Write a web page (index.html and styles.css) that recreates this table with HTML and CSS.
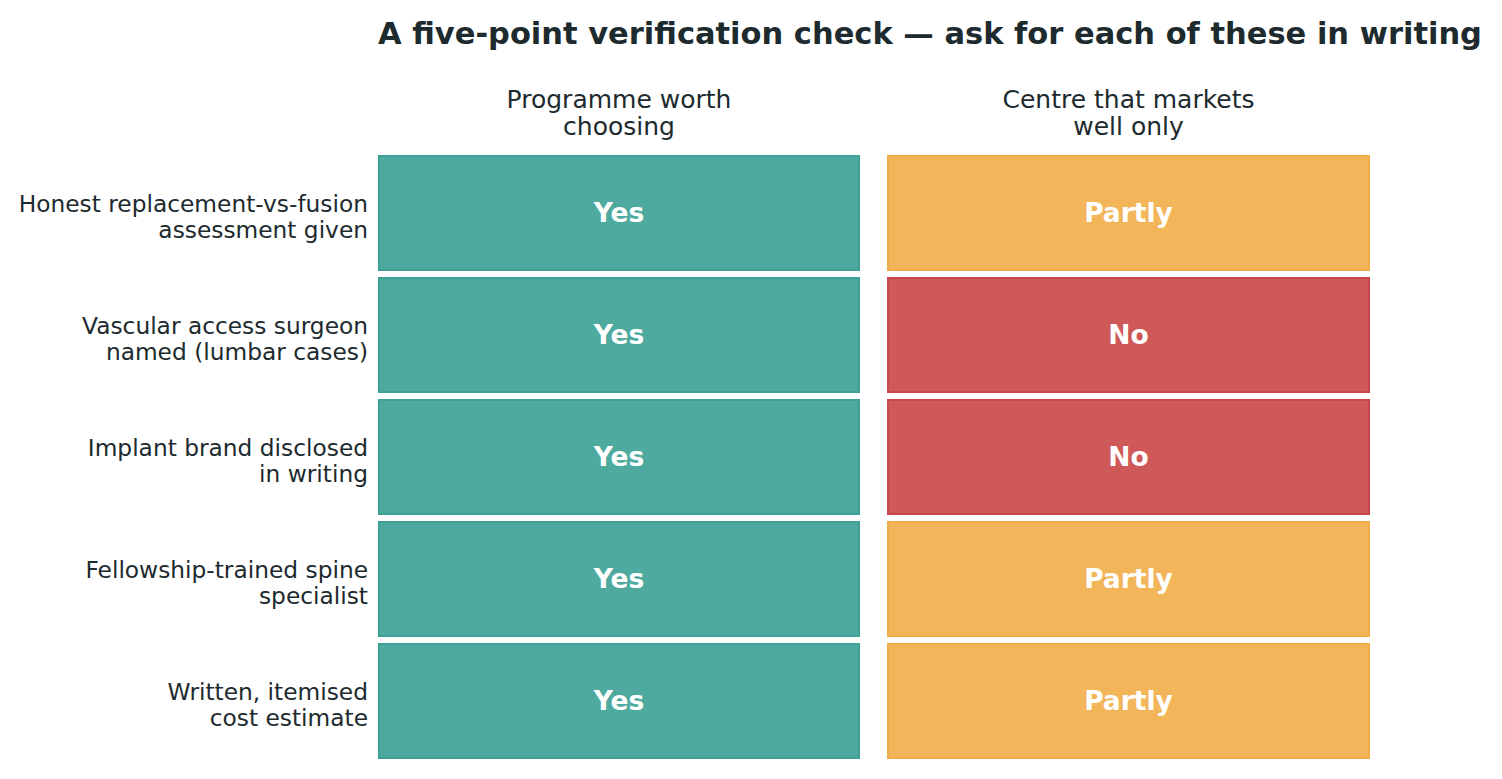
FILE: index.html
```html
<!DOCTYPE html>
<html lang="en">
<head>
<meta charset="utf-8">
<title>Five-point verification check</title>
<link rel="stylesheet" href="styles.css">
</head>
<body>
<div class="chart">
  <h1 class="title">A five-point verification check — ask for each of these in writing</h1>
  <div class="head-row">
    <div class="label-spacer"></div>
    <div class="pair">
      <div class="col-head">Programme worth<br>choosing</div>
      <div class="col-head">Centre that markets<br>well only</div>
    </div>
  </div>
  <div class="rows">
    <div class="row">
      <div class="label">Honest replacement-vs-fusion<br>assessment given</div>
      <div class="pair">
        <div class="cell yes">Yes</div>
        <div class="cell partly">Partly</div>
      </div>
    </div>
    <div class="row">
      <div class="label">Vascular access surgeon<br>named (lumbar cases)</div>
      <div class="pair">
        <div class="cell yes">Yes</div>
        <div class="cell no">No</div>
      </div>
    </div>
    <div class="row">
      <div class="label">Implant brand disclosed<br>in writing</div>
      <div class="pair">
        <div class="cell yes">Yes</div>
        <div class="cell no">No</div>
      </div>
    </div>
    <div class="row">
      <div class="label">Fellowship-trained spine<br>specialist</div>
      <div class="pair">
        <div class="cell yes">Yes</div>
        <div class="cell partly">Partly</div>
      </div>
    </div>
    <div class="row">
      <div class="label">Written, itemised<br>cost estimate</div>
      <div class="pair">
        <div class="cell yes">Yes</div>
        <div class="cell partly">Partly</div>
      </div>
    </div>
  </div>
</div>
</body>
</html>
```
FILE: styles.css
```css
html, body {
  margin: 0;
  padding: 0;
  background: #ffffff;
}

body {
  font-family: "DejaVu Sans", "Liberation Sans", sans-serif;
  color: #1d2a2e;
  width: 1502px;
  height: 779px;
  overflow: hidden;
}

.chart {
  display: flex;
  flex-direction: column;
}

.title {
  margin: 0;
  padding: 15.5px 0 0 378px;
  font-size: 30.5px;
  line-height: 36px;
  font-weight: bold;
  white-space: nowrap;
  color: #1d2a2e;
}

.head-row {
  display: flex;
  margin-top: 34.5px;
}

.label-spacer {
  width: 378px;
  flex: none;
}

.pair {
  display: flex;
  gap: 27px;
}

.col-head {
  width: 482px;
  text-align: center;
  font-size: 25px;
  line-height: 27px;
}

.col-head + .col-head {
  width: 483px;
}

.rows {
  display: flex;
  flex-direction: column;
  gap: 6px;
  margin-top: 15px;
}

.row {
  display: flex;
  align-items: center;
}

.label {
  width: 368px;
  margin-right: 10px;
  flex: none;
  text-align: right;
  font-size: 23.3px;
  line-height: 26px;
  padding-top: 8px;
  box-sizing: border-box;
}

.cell {
  width: 482px;
  height: 116px;
  box-sizing: border-box;
  border: 2px solid;
  padding-bottom: 2px;
  display: flex;
  align-items: center;
  justify-content: center;
  color: #ffffff;
  font-weight: bold;
  font-size: 26.5px;
}

.cell + .cell {
  width: 483px;
}

.yes {
  background: #4ea99f;
  border-color: #3da195;
}

.partly {
  background: #f2b55a;
  border-color: #f0ac47;
}

.no {
  background: #cf5858;
  border-color: #c9474b;
}
```
